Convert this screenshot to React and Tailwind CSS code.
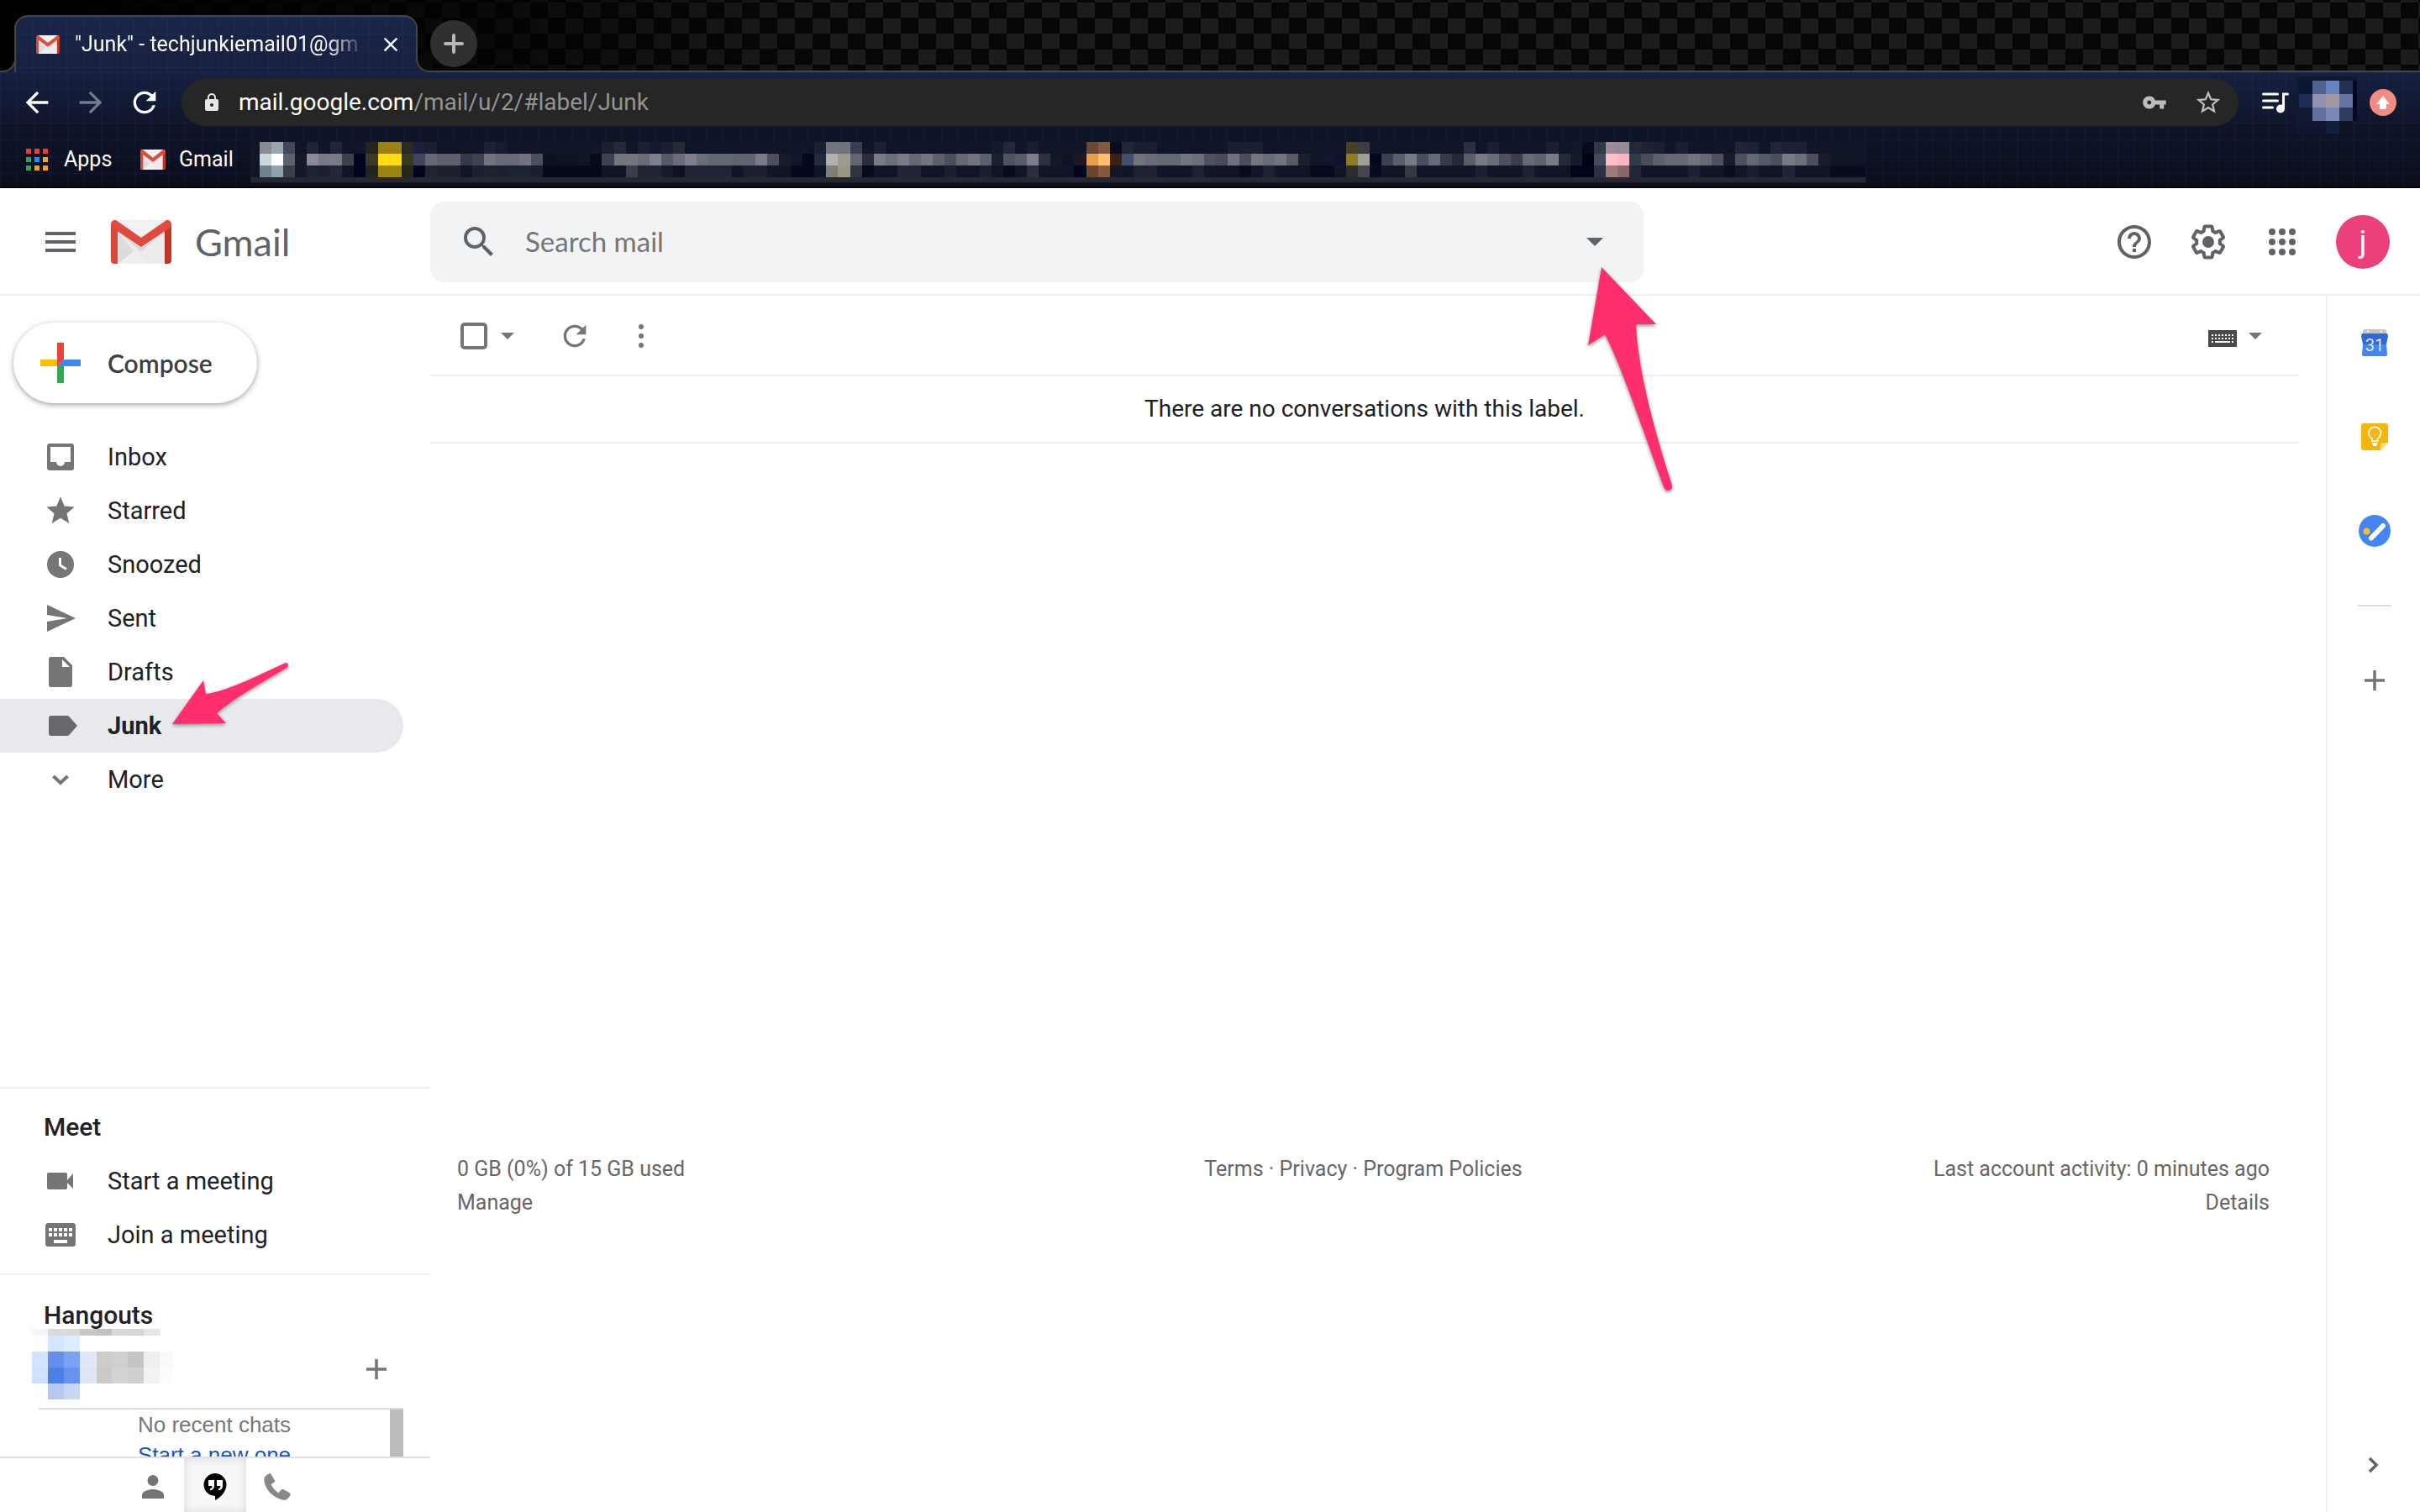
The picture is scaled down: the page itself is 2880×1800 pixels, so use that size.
import React from "react";
import {
  MdArrowBack,
  MdArrowForward,
  MdRefresh,
  MdLock,
  MdVpnKey,
  MdStarBorder,
  MdStar,
  MdSearch,
  MdHelpOutline,
  MdClose,
} from "react-icons/md";

function GmailMark({ className }) {
  return (
    <svg viewBox="0 0 72 52" preserveAspectRatio="none" className={className} aria-hidden="true">
      <path d="M4 0h64v52H4z" fill="#ececec" />
      <path d="M8 14l20 24-20 14z" fill="#dcdcdc" />
      <path d="M8 52l21-16 16 16z" fill="#efefef" />
      <path d="M6 12l30 26 30-26-30 10z" fill="#d2d2d2" opacity=".7" />
      <path d="M4 0h64L36 22z" fill="#f2f2f2" />
      <path d="M0 5l8 7v40H4a4 4 0 0 1-4-4z" fill="#d64a3e" />
      <path d="M72 5l-8 7v40h4a4 4 0 0 0 4-4z" fill="#c0372a" />
      <path d="M0 5C0 1 4-1.500 7 .8L36 21 65 .8C68-1.500 72 1 72 5c0 2-.7 3.500-2.500 4.800L36 32 2.500 9.800C.7 8.500 0 7 0 5z" fill="#df4b3f" />
    </svg>
  );
}

function Caret({ className }) {
  return (
    <svg viewBox="0 0 20 10" className={className} aria-hidden="true">
      <path d="M0 0h20L10 10z" fill="currentColor" />
    </svg>
  );
}

function Plus({ className }) {
  return (
    <svg viewBox="0 0 24 24" className={className} aria-hidden="true">
      <path d="M12 0v24M0 12h24" stroke="currentColor" strokeWidth="3.500" fill="none" />
    </svg>
  );
}

const NAVY = "#101528";
const midRow =
  "c9d9e0 ffffff 58636d 14182b 8b8b97 787887 797a87 3a424d 00061f 3c3a24 ffdb0f ffdb0f 3a371b 42435e 666875 5d606c 5d606c 373847 3d424f 71737f 686a77 686a77 71737f 4d4f60 0c1122 0e1324 0e1324 111528 060b1e 3c424f 73767f 73767f 696c77 7e7f8c 555966 6a6c7a 7f7f8d 6a6e78 636772 636772 606370 606370 7b7b88 4c4d5e 171b2d 11162a 040922 25293b b0b1ae 9b9b8f 63656f 2b2d3e 787b88 6b6e79 7a7b88 666973 737581 5d606d 4b4e5b 656874 727581 5c606c 1a2031 4e5361 595b69 7c7e8a 2e3140 131829 0a1427 201820 ea9b4c ffc170 3a2218 44506a 70737c 696c78 646873 646873 727681 6b6e7b 4f5161 484a5a 6f717e 4c4c5c 73757f 686b78 72757f 575b68 1e1f2d 0f1527 11172a 0c1233 8c7c28 a09f95 020a20 3b414f 5a5d6a 757983 474e5f 656a76 353a49 23283a 5a5d6a 777a85 696d78 4d505f 3b3d4e 656b75 5e626d 787a87 252a3c 151a2d 000318 444b5a ffbfc9 f9b5c1 2f3c47 4b4b5b 5d606d 666975 666975 71757f 666975 4f5161 171c2d 4e505f 646874 555868 4b4e5e 757a85 6c707a 4d4f5e 1a1b2c 0f1427 0f1427 0f1427".split(" ");
const topRow = {
  0: "888a97", 1: "9aa5af", 2: "43465a", 4: "20233a", 6: "20233a", 9: "24251f", 10: "9b8312", 11: "9b8312", 12: "2a2a22", 13: "1c1f3f",
  14: "1b1f30", 19: "1e2238", 20: "161b2d", 29: "1b2031", 30: "252a38", 32: "1b2033", 33: "14192c", 34: "1a1f31", 35: "252a38", 47: "1a2033",
  48: "72757f", 49: "6f747a", 50: "3a3e53", 52: "1b2033", 62: "14192b", 63: "23273b", 65: "1b1e2f", 70: "6d4935", 71: "855a3b", 72: "0c0c1c",
  73: "22263a", 74: "1a1f30", 75: "1a1f30", 82: "1b2031", 83: "1b2031", 84: "1b2031", 92: "474225", 93: "3d3c41", 102: "2a2e40", 104: "1a1f31",
  109: "1b2031", 111: "131829", 112: "060b20", 113: "2f3a47", 114: "9f8994", 115: "958b97", 116: "222838", 117: "1e2334", 118: "1b2031", 120: "1a1f31",
  125: "20253a", 126: "1c2134", 128: "20253a", 129: "1c2134", 130: "1c2134",
};
const bottomRow = {
  0: "70828d", 1: "8ea3ae", 2: "3a3d4b", 3: "121729", 4: "1d2333", 5: "1a2030", 6: "22283a", 7: "101629", 8: "00061f", 9: "22241f", 10: "9b8312",
  11: "9b8312", 12: "26261d", 13: "00041f", 14: "20242f", 15: "1c2130", 16: "1c2130", 18: "1a2030", 19: "1e2230", 20: "1a2030", 21: "1c2333", 22: "1c2333", 23: "1a1f30",
  24: "040a1c", 25: "040a1c", 26: "040a1c", 27: "040a1c", 28: "040a1c", 31: "3b3d4b", 32: "1e2433", 33: "1e2433", 34: "171c2c", 35: "0d1222", 36: "1e2433",
  37: "1e2433", 38: "1e2433", 39: "1e2433", 41: "1a2030", 42: "1a2030", 45: "040a1c", 46: "040a1c", 48: "7f7f77", 49: "9b9882", 50: "2f3442", 51: "060b1e",
  54: "212434", 55: "212434", 58: "1a1f30", 61: "1a1f30", 63: "060b1e", 65: "2c2e3e", 69: "00061f", 70: "69472f", 71: "855a3b", 72: "121729", 74: "1d2232",
  75: "1d2232", 79: "1d2232", 83: "060b1e", 85: "1d2232", 89: "050a1c", 90: "050a1c", 92: "2d2d2c", 93: "45454f", 94: "060b1e", 97: "353945", 103: "1c2030",
  105: "0e1525", 107: "1d2232", 111: "00051a", 112: "00051a", 113: "2a3142", 114: "9b7a7d", 115: "8c666c", 116: "1e2838", 117: "10152a", 121: "1d2232",
  124: "080d20", 126: "181d2f", 129: "1e2433", 133: "060b1e", 134: "060b1e", 135: "060b1e",
};

function Mosaic({ cells, width, height, className }) {
  return (
    <svg viewBox={`0 0 ${width} ${height}`} width={width} height={height} shapeRendering="crispEdges" className={className} aria-hidden="true">
      {cells.map(([x, y, w, h, fill], i) => (
        <rect key={i} x={x} y={y} width={w} height={h} fill={fill} />
      ))}
    </svg>
  );
}

const columnX = (k) => 11 + Math.round((k * 281) / 20);

const bookmarkCells = [
  [0, 0, 1922, 52, NAVY],
  ...midRow.flatMap((mid, k) => {
    const x = columnX(k);
    const w = columnX(k + 1) - x;
    const cells = [[x, 17, w, 14, "#" + mid]];
    if (topRow[k]) cells.push([x, 3, w, 14, "#" + topRow[k]]);
    if (bottomRow[k]) cells.push([x, 31, w, 14, "#" + bottomRow[k]]);
    return cells;
  }),
  [0, 45, 1922, 6, "#262731"],
];

const extensionCells = [
  [0, 0, 72, 5, "#141a2a"],
  [0, 5, 3, 63, "#121931"],
  [3, 5, 16, 16, "#0b1632"],
  [19, 5, 16, 16, "#4f6293"],
  [35, 5, 16, 16, "#6684c2"],
  [51, 5, 16, 16, "#243257"],
  [67, 5, 5, 16, "#030a24"],
  [3, 21, 16, 16, "#1f2e54"],
  [19, 21, 16, 16, "#9292ad"],
  [35, 21, 16, 16, "#a3979f"],
  [51, 21, 16, 16, "#6474a6"],
  [67, 21, 5, 16, "#00041a"],
  [3, 37, 16, 16, "#111933"],
  [19, 37, 16, 16, "#63719f"],
  [35, 37, 16, 16, "#7d85b3"],
  [51, 37, 16, 16, "#303c60"],
  [67, 37, 5, 16, "#050c22"],
  [3, 53, 32, 15, "#0f162e"],
  [35, 53, 16, 15, "#12203e"],
  [51, 53, 16, 15, "#0d1424"],
];

const profileCells = [
  [0, 0, 19, 8, "#f5f5f5"],
  [19, 0, 38, 8, "#dbdbd6"],
  [57, 0, 20, 8, "#c8c8c8"],
  [77, 0, 18, 8, "#c1c1c1"],
  [95, 0, 19, 8, "#d5d8d7"],
  [114, 0, 19, 8, "#d4d4d4"],
  [133, 0, 20, 8, "#e5e5e5"],
  [0, 8, 19, 19, "#fcfdff"],
  [19, 8, 19, 19, "#d3e5ff"],
  [38, 8, 19, 19, "#deecff"],
  [0, 27, 19, 19, "#d1e4ff"],
  [19, 27, 19, 19, "#6490ec"],
  [38, 27, 19, 19, "#7aa2f5"],
  [57, 27, 20, 19, "#dee8f6"],
  [77, 27, 18, 19, "#cdccc8"],
  [95, 27, 19, 19, "#d0d0d0"],
  [114, 27, 19, 19, "#c5c5c5"],
  [133, 27, 19, 19, "#eeeeee"],
  [152, 27, 16, 19, "#f9f9f9"],
  [0, 46, 19, 19, "#cfe1ff"],
  [19, 46, 19, 19, "#4d80e6"],
  [38, 46, 19, 19, "#6793ef"],
  [57, 46, 20, 19, "#dfe5f3"],
  [77, 46, 18, 19, "#cbcac6"],
  [95, 46, 19, 19, "#d1d4d3"],
  [114, 46, 19, 19, "#cfcfcf"],
  [133, 46, 19, 19, "#f2f2f2"],
  [152, 46, 16, 19, "#fcfcfc"],
  [0, 65, 19, 19, "#fcfdff"],
  [19, 65, 19, 19, "#b7c8f2"],
  [38, 65, 19, 19, "#c9d6f7"],
];

const appsDots = ["#f8372f", "#f8372f", "#f8372f", "#2fa257", "#1f8df5", "#f4a408", "#2fa257", "#f4a408", "#f4a408"];

function Browser() {
  return (
    <header className="text-white">
      <div className="flex h-[86px] items-end bg-black bg-[linear-gradient(to_right,#000_0%,#000a_20%,#0000_35%),conic-gradient(#1c1c1c_25%,#070707_0_50%,#1c1c1c_0_75%,#070707_0)] bg-[length:100%_100%,42px_37px] bg-[position:0_0,1px_3px]">
        <div className="h-5 w-[19px] bg-[#17203f]">
          <div className="h-5 rounded-br-2xl border-r-2 border-b-2 border-[#454545] bg-black" />
        </div>
        <div className="-ml-0.5 flex h-[68px] w-[480px] items-center rounded-t-2xl border-x-2 border-t-2 border-[#454545] bg-[linear-gradient(#2a418033_1px,#0000_1px),linear-gradient(to_right,#2a418033_1px,#0000_1px),linear-gradient(#1b2548,#17203f)] bg-[length:20px_20px,20px_20px,100%_100%] pr-4 pl-6">
          <GmailMark className="h-[22px] w-7 shrink-0" />
          <div className="ml-[18px] flex-1 text-[25px] leading-8 whitespace-nowrap mask-[linear-gradient(to_right,#000_84%,#0000_98%)]">
            "Junk" - techjunkiemail01@gm
          </div>
          <button aria-label="Close tab" className="ml-2">
            <MdClose className="size-7" />
          </button>
        </div>
        <div className="-ml-0.5 h-5 w-[19px] bg-[#17203f]">
          <div className="h-5 rounded-bl-2xl border-b-2 border-l-2 border-[#454545] bg-[#0a0a0a]" />
        </div>
        <div className="flex h-full flex-1 items-center border-b-2 border-[#454545] pt-5">
          <button aria-label="New tab" className="-ml-0.5 flex size-14 items-center justify-center rounded-full bg-[#303030] text-[#b8b8b8]">
            <svg viewBox="0 0 24 24" className="size-6" aria-hidden="true">
              <path d="M12 2v20M2 12h20" stroke="currentColor" strokeWidth="4" strokeLinecap="round" />
            </svg>
          </button>
        </div>
      </div>

      <div className="border-b-2 border-[#04050a] bg-[linear-gradient(#2a418026_1px,#0000_1px),linear-gradient(to_right,#2a418026_1px,#0000_1px),linear-gradient(#17203f,#0e1428_50%,#0c0e1c)] bg-[length:20px_20px,20px_20px,100%_100%]">
        <div className="flex h-[72px] items-center pr-7 pl-6">
          <button aria-label="Back">
            <MdArrowBack className="size-10" />
          </button>
          <button aria-label="Forward" className="ml-6 text-[#747a8c]">
            <MdArrowForward className="size-10" />
          </button>
          <button aria-label="Reload" className="ml-6">
            <MdRefresh className="size-10" />
          </button>
          <div className="ml-6 flex h-14 flex-1 items-center rounded-full bg-[#262626] pr-[19px] pl-6">
            <MdLock className="size-6 text-[#e6e6e6]" />
            <div className="ml-5 flex-1 text-[28px] leading-9 text-[#949494]">
              <span className="text-white">mail.google.com</span>/mail/u/2/#label/Junk
            </div>
            <button aria-label="Saved passwords" className="text-[#bdbdbd]">
              <MdVpnKey className="size-[30px]" />
            </button>
            <button aria-label="Bookmark this page" className="ml-8 text-[#bdbdbd]">
              <MdStarBorder className="size-[34px]" />
            </button>
          </div>
          <button aria-label="Playlist" className="ml-7">
            <svg viewBox="0 0 32 26" className="h-[26px] w-8" fill="none" stroke="#fff" strokeWidth="3" strokeLinecap="round" aria-hidden="true">
              <path d="M1.500 3h17M1.500 11h17M1.500 19h11" />
              <path d="M25.500 20V3h5" />
              <circle cx="22" cy="20.500" r="5" fill="#fff" stroke="none" />
            </svg>
          </button>
          <Mosaic cells={extensionCells} width={72} height={68} className="mt-1.5 ml-[9px]" />
          <button aria-label="Update" className="ml-[15px]">
            <svg viewBox="0 0 32 32" className="size-8" aria-hidden="true">
              <circle cx="16" cy="16" r="16" fill="#f28b82" />
              <path d="M16 8l8 10h-4v6h-8v-6H8z" fill="#fff" />
            </svg>
          </button>
        </div>
        <nav aria-label="Bookmarks" className="flex h-16 items-center pl-[31px] text-[25px] leading-8">
          <a href="#apps" className="flex w-[136px] items-center gap-[19px]">
            <span className="grid grid-cols-3 gap-1">
              {appsDots.map((c, i) => (
                <span key={i} className="size-1.5" style={{ backgroundColor: c }} />
              ))}
            </span>
            Apps
          </a>
          <a href="#gmail" className="flex w-[131px] items-center gap-4">
            <GmailMark className="h-6 w-[30px]" />
            Gmail
          </a>
          <Mosaic cells={bookmarkCells} width={1922} height={52} className="mt-1" />
        </nav>
      </div>
    </header>
  );
}

function GearIcon() {
  return (
    <svg viewBox="0 0 24 24" className="size-12" fill="currentColor" aria-hidden="true">
      <path d="M13.850 22.250h-3.700c-.74 0-1.360-.54-1.450-1.270l-.27-1.890c-.27-.14-.53-.29-.79-.46l-1.800.72c-.7.26-1.470-.03-1.810-.65L2.200 15.530c-.35-.66-.2-1.440.36-1.880l1.530-1.190c-.01-.15-.02-.3-.02-.46 0-.15.010-.31.020-.46l-1.520-1.190c-.59-.45-.74-1.260-.37-1.880l1.850-3.190c.34-.62 1.110-.9 1.790-.63l1.810.73c.26-.17.520-.32.780-.46l.27-1.910c.09-.7.710-1.250 1.440-1.250h3.700c.74 0 1.360.54 1.450 1.270l.27 1.890c.27.14.53.29.79.46l1.800-.72c.71-.26 1.480.03 1.820.65l1.840 3.180c.36.66.2 1.440-.36 1.880l-1.520 1.190c.01.150.02.3.02.46s-.01.310-.02.46l1.520 1.190c.56.450.72 1.230.37 1.860l-1.860 3.220c-.34.620-1.110.9-1.800.63l-1.800-.72c-.26.170-.52.320-.78.460l-.27 1.910c-.1.680-.72 1.220-1.460 1.220zm-3.230-2h2.760l.37-2.550.53-.22c.44-.18.880-.44 1.340-.78l.45-.34 2.380.96 1.380-2.400-2.030-1.580.07-.56c.03-.26.060-.51.060-.78s-.03-.53-.06-.78l-.07-.56 2.030-1.580-1.390-2.400-2.390.96-.45-.35c-.42-.32-.87-.58-1.330-.77l-.52-.22-.37-2.550h-2.760l-.37 2.550-.53.21c-.44.190-.88.440-1.340.79l-.45.33-2.380-.95-1.390 2.390 2.030 1.580-.07.56a7 7 0 0 0-.06.79c0 .26.020.53.060.78l.07.56-2.030 1.580 1.380 2.400 2.390-.96.45.35c.43.330.86.580 1.330.77l.53.22z" />
      <circle cx="12" cy="12" r="3.500" />
    </svg>
  );
}

function AppHeader() {
  return (
    <header className="flex items-center border-b-2 border-[#eeeeee] pt-4 pr-9 pb-3.5 text-[#5f6368]">
      <div className="flex w-[512px] shrink-0 items-center pl-[54px]">
        <button aria-label="Main menu" className="flex w-9 flex-col gap-1.5">
          <span className="h-1 bg-[#5f6368]" />
          <span className="h-1 bg-[#5f6368]" />
          <span className="h-1 bg-[#5f6368]" />
        </button>
        <a href="#inbox" className="ml-[42px] flex items-center gap-7">
          <GmailMark className="h-[52px] w-[72px]" />
          <span className="font-[Lato,sans-serif] text-[45px] leading-[52px]">Gmail</span>
        </a>
      </div>
      <div className="relative flex h-24 max-w-[1444px] flex-1 items-center rounded-2xl bg-[#f1f3f4] pl-[34px]">
        <button aria-label="Search">
          <MdSearch className="size-12" />
        </button>
        <input
          type="text"
          aria-label="Search mail"
          placeholder="Search mail"
          className="ml-[31px] h-12 flex-1 bg-transparent font-[Lato,sans-serif] text-[33px] outline-none placeholder:text-[#757575]"
        />
        <button aria-label="Show search options" className="mr-12">
          <Caret className="h-2.5 w-5" />
        </button>
        <svg viewBox="0 0 110 276" className="pointer-events-none absolute top-[74px] -right-10 z-10 h-[276px] w-[110px] drop-shadow-[0_2px_2px_rgba(0,0,0,0.45)]" aria-hidden="true">
          <path d="M20 4l65 68-24 0c2 52 22 128 43 192 1 6-7 9-10 2C69 198 44 122 24 84L4 97z" fill="#ff2f6d" />
        </svg>
      </div>
      <div className="ml-auto flex items-center gap-10">
        <button aria-label="Support">
          <MdHelpOutline className="size-12" />
        </button>
        <button aria-label="Settings">
          <GearIcon />
        </button>
        <button aria-label="Google apps">
          <svg viewBox="0 0 48 48" className="size-12" fill="currentColor" aria-hidden="true">
            {[12, 24, 36].map((y) => [12, 24, 36].map((x) => <circle key={x + "-" + y} cx={x} cy={y} r="4" />))}
          </svg>
        </button>
        <button aria-label="Account" className="flex size-16 items-center justify-center rounded-full bg-[#ec407a] text-[36px] leading-none text-white">
          j
        </button>
      </div>
    </header>
  );
}

const svg48 = (children) => (
  <svg viewBox="0 0 48 48" className="size-12 shrink-0" fill="currentColor" aria-hidden="true">
    {children}
  </svg>
);

const keys = [0, 1, 2, 3, 4].map((i) => `M${10 + i * 6} 16h4v4h-4zM${10 + i * 6} 22h4v4h-4z`).join("");

const icons = {
  inbox: svg48(<path fillRule="evenodd" d="M11 8h26a3 3 0 0 1 3 3v26a3 3 0 0 1-3 3H11a3 3 0 0 1-3-3V11a3 3 0 0 1 3-3zm1 4v18h7a5 5 0 0 0 10 0h7V12z" />),
  star: <MdStar className="mx-1 size-10 shrink-0" />,
  clock: svg48(
    <>
      <circle cx="24" cy="24" r="16" />
      <path d="M23.500 16v9l7.500 4.500" fill="none" stroke="#fff" strokeWidth="3" />
    </>
  ),
  sent: svg48(<path d="M8 8l34 16L8 40V28l24-4-24-4z" />),
  draft: svg48(<path fillRule="evenodd" d="M13 6h15l10 10v23a3 3 0 0 1-3 3H13a3 3 0 0 1-3-3V9a3 3 0 0 1 3-3zm13 3v9h9z" />),
  label: svg48(<path d="M13 12h19a3 3 0 0 1 2.500 1.300L44 24l-9.500 10.700A3 3 0 0 1 32 36H13a3 3 0 0 1-3-3V15a3 3 0 0 1 3-3z" />),
  more: svg48(<path d="M15.500 20l8.500 8 8.500-8" fill="none" stroke="currentColor" strokeWidth="4" />),
  video: svg48(<path d="M10 14h20a2 2 0 0 1 2 2v7l7-8v18l-7-7v6a2 2 0 0 1-2 2H10a2 2 0 0 1-2-2V16a2 2 0 0 1 2-2z" />),
  keyboard: svg48(
    <>
      <rect x="6" y="10" width="36" height="28" rx="3.500" />
      <path d={keys + "M16 30h16v4H16z"} fill="#fff" />
    </>
  ),
};

const folders = [
  ["Inbox", "inbox"],
  ["Starred", "star"],
  ["Snoozed", "clock"],
  ["Sent", "sent"],
  ["Drafts", "draft"],
  ["Junk", "label"],
  ["More", "more"],
];

function NavRow({ label, icon, active }) {
  return (
    <a
      href={"#" + label.toLowerCase().replace(/ /g, "-")}
      aria-current={active ? "page" : undefined}
      className={
        active
          ? "relative mr-8 flex h-16 items-center gap-8 rounded-r-full bg-[#e8eaed] pl-12 font-bold"
          : "relative mr-8 flex h-16 items-center gap-8 pl-12"
      }
    >
      <span className={active ? "text-[#67696c]" : "text-[#757575]"}>{icons[icon]}</span>
      {label}
      {active && (
        <svg viewBox="0 0 150 84" className="pointer-events-none absolute -top-[48px] left-[200px] z-10 h-[84px] w-[150px] drop-shadow-[0_2px_2px_rgba(0,0,0,0.4)]" aria-hidden="true">
          <path d="M5 78L42 26l3 16c26-3 66-24 95-37 3 0 4 4 1 6-28 17-64 37-83 54l11 12z" fill="#ff2f6d" />
        </svg>
      )}
    </a>
  );
}

function Sidebar() {
  return (
    <aside className="flex w-[512px] shrink-0 flex-col text-[29px] leading-9 text-[#202124]">
      <button className="my-8 ml-4 flex h-24 w-[290px] items-center gap-5 rounded-full pl-5 font-[Lato,sans-serif] text-[30px] font-semibold text-[#3c4043] shadow-[0_2px_4px_0_rgba(60,64,67,0.3),0_2px_6px_2px_rgba(60,64,67,0.15)]">
        <svg viewBox="0 0 36 36" className="size-[72px]" aria-hidden="true">
          <path fill="#34A853" d="M16 16v14h4V20z" />
          <path fill="#4285F4" d="M30 16H20l-4 4h14z" />
          <path fill="#FBBC05" d="M6 16v4h10l4-4z" />
          <path fill="#EA4335" d="M20 16V6h-4v14z" />
        </svg>
        Compose
      </button>
      <nav aria-label="Folders">
        {folders.map(([label, icon]) => (
          <NavRow key={label} label={label} icon={icon} active={label === "Junk"} />
        ))}
      </nav>

      <section className="mt-auto border-t-2 border-[#eeeeee] py-3.5">
        <h2 className="flex h-16 items-center pl-[52px] text-[30px] font-medium">Meet</h2>
        <NavRow label="Start a meeting" icon="video" />
        <NavRow label="Join a meeting" icon="keyboard" />
      </section>

      <section className="border-t-2 border-[#eeeeee] pt-[26px]">
        <h2 className="flex h-11 items-center pl-[52px] text-[30px] font-medium">Hangouts</h2>
        <div className="relative flex h-[88px] items-center justify-end pr-[52px] pb-1">
          <Mosaic cells={profileCells} width={168} height={86} className="absolute -top-1.5 left-[38px]" />
          <button aria-label="New conversation" className="text-[#757575]">
            <Plus className="size-6" />
          </button>
        </div>
        <div className="mr-8 ml-[46px] flex h-[58px] overflow-hidden border-t-2 border-[#dddddd]">
          <div className="flex-1 text-center font-['Liberation_Sans',Arial,sans-serif] text-[26px] leading-9 text-[#777]">
            <p>No recent chats</p>
            <a href="#new-chat" className="text-[#1155cc]">Start a new one</a>
          </div>
          <div className="w-4 bg-[#bbbbbb]" />
        </div>
        <div className="flex h-[66px] justify-center border-t-2 border-[#e0e0e0] text-[#757575]">
          <button aria-label="Contacts" className="flex w-[74px] items-center justify-center pt-1">
            <svg viewBox="0 0 26 28" className="h-7 w-[26px]" fill="currentColor" aria-hidden="true">
              <circle cx="13" cy="6.500" r="6.500" />
              <path d="M0 28v-4c0-5 8-7 13-7s13 2 13 7v4z" />
            </svg>
          </button>
          <button aria-label="Conversations" className="flex w-[74px] items-center justify-center bg-[#f7f7f7] pt-1 shadow-[inset_0_0_12px_rgba(0,0,0,0.12)]">
            <svg viewBox="0 0 28 32" className="h-8 w-7" aria-hidden="true">
              <path d="M14 0a13.500 13.500 0 0 1 13.500 13.500C27.500 21 21 28.500 14 32v-5A13.500 13.500 0 0 1 14 0z" fill="#000" />
              <path d="M6 8h7v7c0 3-2 5-5 5v-2c1.500 0 2.500-1 2.500-3H6zM16 8h7v7c0 3-2 5-5 5v-2c1.500 0 2.500-1 2.500-3H16z" fill="#fff" />
            </svg>
          </button>
          <button aria-label="Phone calls" className="flex w-[74px] items-center justify-center pt-1 text-[#888]">
            <svg viewBox="0 0 32 32" className="size-8" fill="currentColor" aria-hidden="true">
              <path d="M6 .5c1-.6 2-.5 2.500.4l4.500 7.600c.4.800.2 1.500-.5 2l-4 2.800c2.200 4.200 5.200 7.600 9 10l3.300-3.800c.7-.7 1.400-.8 2.200-.4l7.800 4.200c1 .6 1.200 1.500.7 2.400-1.500 3-4 5.800-6.500 6C12 31 0 18 .3 6.500.4 4 3 2 6 .5z" />
            </svg>
          </button>
        </div>
      </section>
    </aside>
  );
}

function Main() {
  return (
    <main className="flex flex-1 flex-col pr-8">
      <div className="flex h-24 items-center border-b-2 border-[#eeeeee] pt-0.5 pr-11 pl-9 text-[#757575]">
        <input type="checkbox" aria-label="Select all" className="size-8 appearance-none rounded-[5px] border-4 border-[#757575]" />
        <button aria-label="Select" className="ml-4">
          <Caret className="h-2 w-4" />
        </button>
        <button aria-label="Refresh" className="ml-[52px]">
          <MdRefresh className="size-10" />
        </button>
        <button aria-label="More actions" className="ml-14 flex flex-col gap-[5px]">
          <span className="size-1.5 rounded-full bg-[#757575]" />
          <span className="size-1.5 rounded-full bg-[#757575]" />
          <span className="size-1.5 rounded-full bg-[#757575]" />
        </button>
        <button aria-label="Select input tool" className="ml-auto flex items-center gap-3.5">
          <svg viewBox="0 0 34 20" className="mt-1.5 h-5 w-[34px]" aria-hidden="true">
            <path d="M0 0h34v20H0z" fill="#494949" />
            <path d="M4 6h27M4 10h27" stroke="#fff" strokeWidth="2" strokeDasharray="2 2" />
            <path d="M4 14h2M8 14h18M28 14h2" stroke="#fff" strokeWidth="2" />
          </svg>
          <Caret className="h-2 w-4" />
        </button>
      </div>
      <p className="flex h-20 items-center justify-center border-b-2 border-[#eeeeee] text-[28px] text-[#202124]">
        There are no conversations with this label.
      </p>
      <footer className="mt-auto grid grid-cols-3 pr-[35px] pb-[348px] pl-8 text-[25px] leading-10 text-[#666]">
        <div>
          <p>0 GB (0%) of 15 GB used</p>
          <a href="#manage">Manage</a>
        </div>
        <div className="text-center">
          <a href="#terms">Terms</a> · <a href="#privacy">Privacy</a> · <a href="#policies">Program Policies</a>
        </div>
        <div className="text-right">
          <p>Last account activity: 0 minutes ago</p>
          <a href="#details">Details</a>
        </div>
      </footer>
    </main>
  );
}

function SidePanel() {
  return (
    <aside className="flex w-28 shrink-0 flex-col items-center border-l-2 border-[#f1f3f4] pl-0.5 text-[#757575]">
      <button aria-label="Calendar" className="flex h-28 items-center">
        <svg viewBox="0 0 32 32" className="size-8" aria-hidden="true">
          <path d="M4 0h24a2 2 0 0 1 2 2v4H2V2a2 2 0 0 1 2-2z" fill="#c3c3c3" />
          <circle cx="8" cy="2.500" r="1" fill="#fff" />
          <circle cx="24" cy="2.500" r="1" fill="#fff" />
          <path d="M1 5h30l1 3-2 10H2L0 8z" fill="#3367d6" />
          <path d="M2 18h28l1 12a2 2 0 0 1-2 2H3a2 2 0 0 1-2-2z" fill="#4285f4" />
          <text x="16" y="26" textAnchor="middle" fontSize="20" fill="#e4e8f5" fontFamily="Roboto, sans-serif">31</text>
        </svg>
      </button>
      <button aria-label="Keep" className="flex h-28 items-center">
        <svg viewBox="0 0 32 32" className="size-8" aria-hidden="true">
          <path d="M3 0h26a3 3 0 0 1 3 3v20l-9 9H3a3 3 0 0 1-3-3V3a3 3 0 0 1 3-3z" fill="#f5b50a" />
          <path d="M23 32v-7a2 2 0 0 1 2-2h7z" fill="#fbdc87" />
          <path d="M13 21v-3a7.200 7.200 0 1 1 6.500 0v3zM13 24h6.500M14 26h4.500" fill="none" stroke="#fff" strokeWidth="1.800" />
        </svg>
      </button>
      <button aria-label="Tasks" className="flex h-28 items-center">
        <svg viewBox="0 0 38 38" className="size-[38px]" aria-hidden="true">
          <circle cx="19" cy="19" r="19" fill="#4585f2" />
          <circle cx="9.500" cy="19.500" r="4" fill="#fbbc14" />
          <path d="M15 27.500L29 13" stroke="#fff" strokeWidth="6" strokeLinecap="round" />
        </svg>
      </button>
      <div className="my-8 h-0.5 w-10 bg-[#dadce0]" />
      <button aria-label="Get add-ons" className="flex h-28 items-center">
        <Plus className="size-6" />
      </button>
      <button aria-label="Hide side panel" className="mt-auto flex h-28 items-center pr-1 text-[#5f6368]">
        <svg viewBox="0 0 12 20" className="h-5 w-3" aria-hidden="true">
          <path d="M2 2l8 8-8 8" fill="none" stroke="currentColor" strokeWidth="3.500" />
        </svg>
      </button>
    </aside>
  );
}

export default function App() {
  return (
    <div className="flex min-h-screen flex-col bg-white font-[Roboto,sans-serif]">
      <Browser />
      <AppHeader />
      <div className="flex flex-1">
        <Sidebar />
        <Main />
        <SidePanel />
      </div>
    </div>
  );
}
